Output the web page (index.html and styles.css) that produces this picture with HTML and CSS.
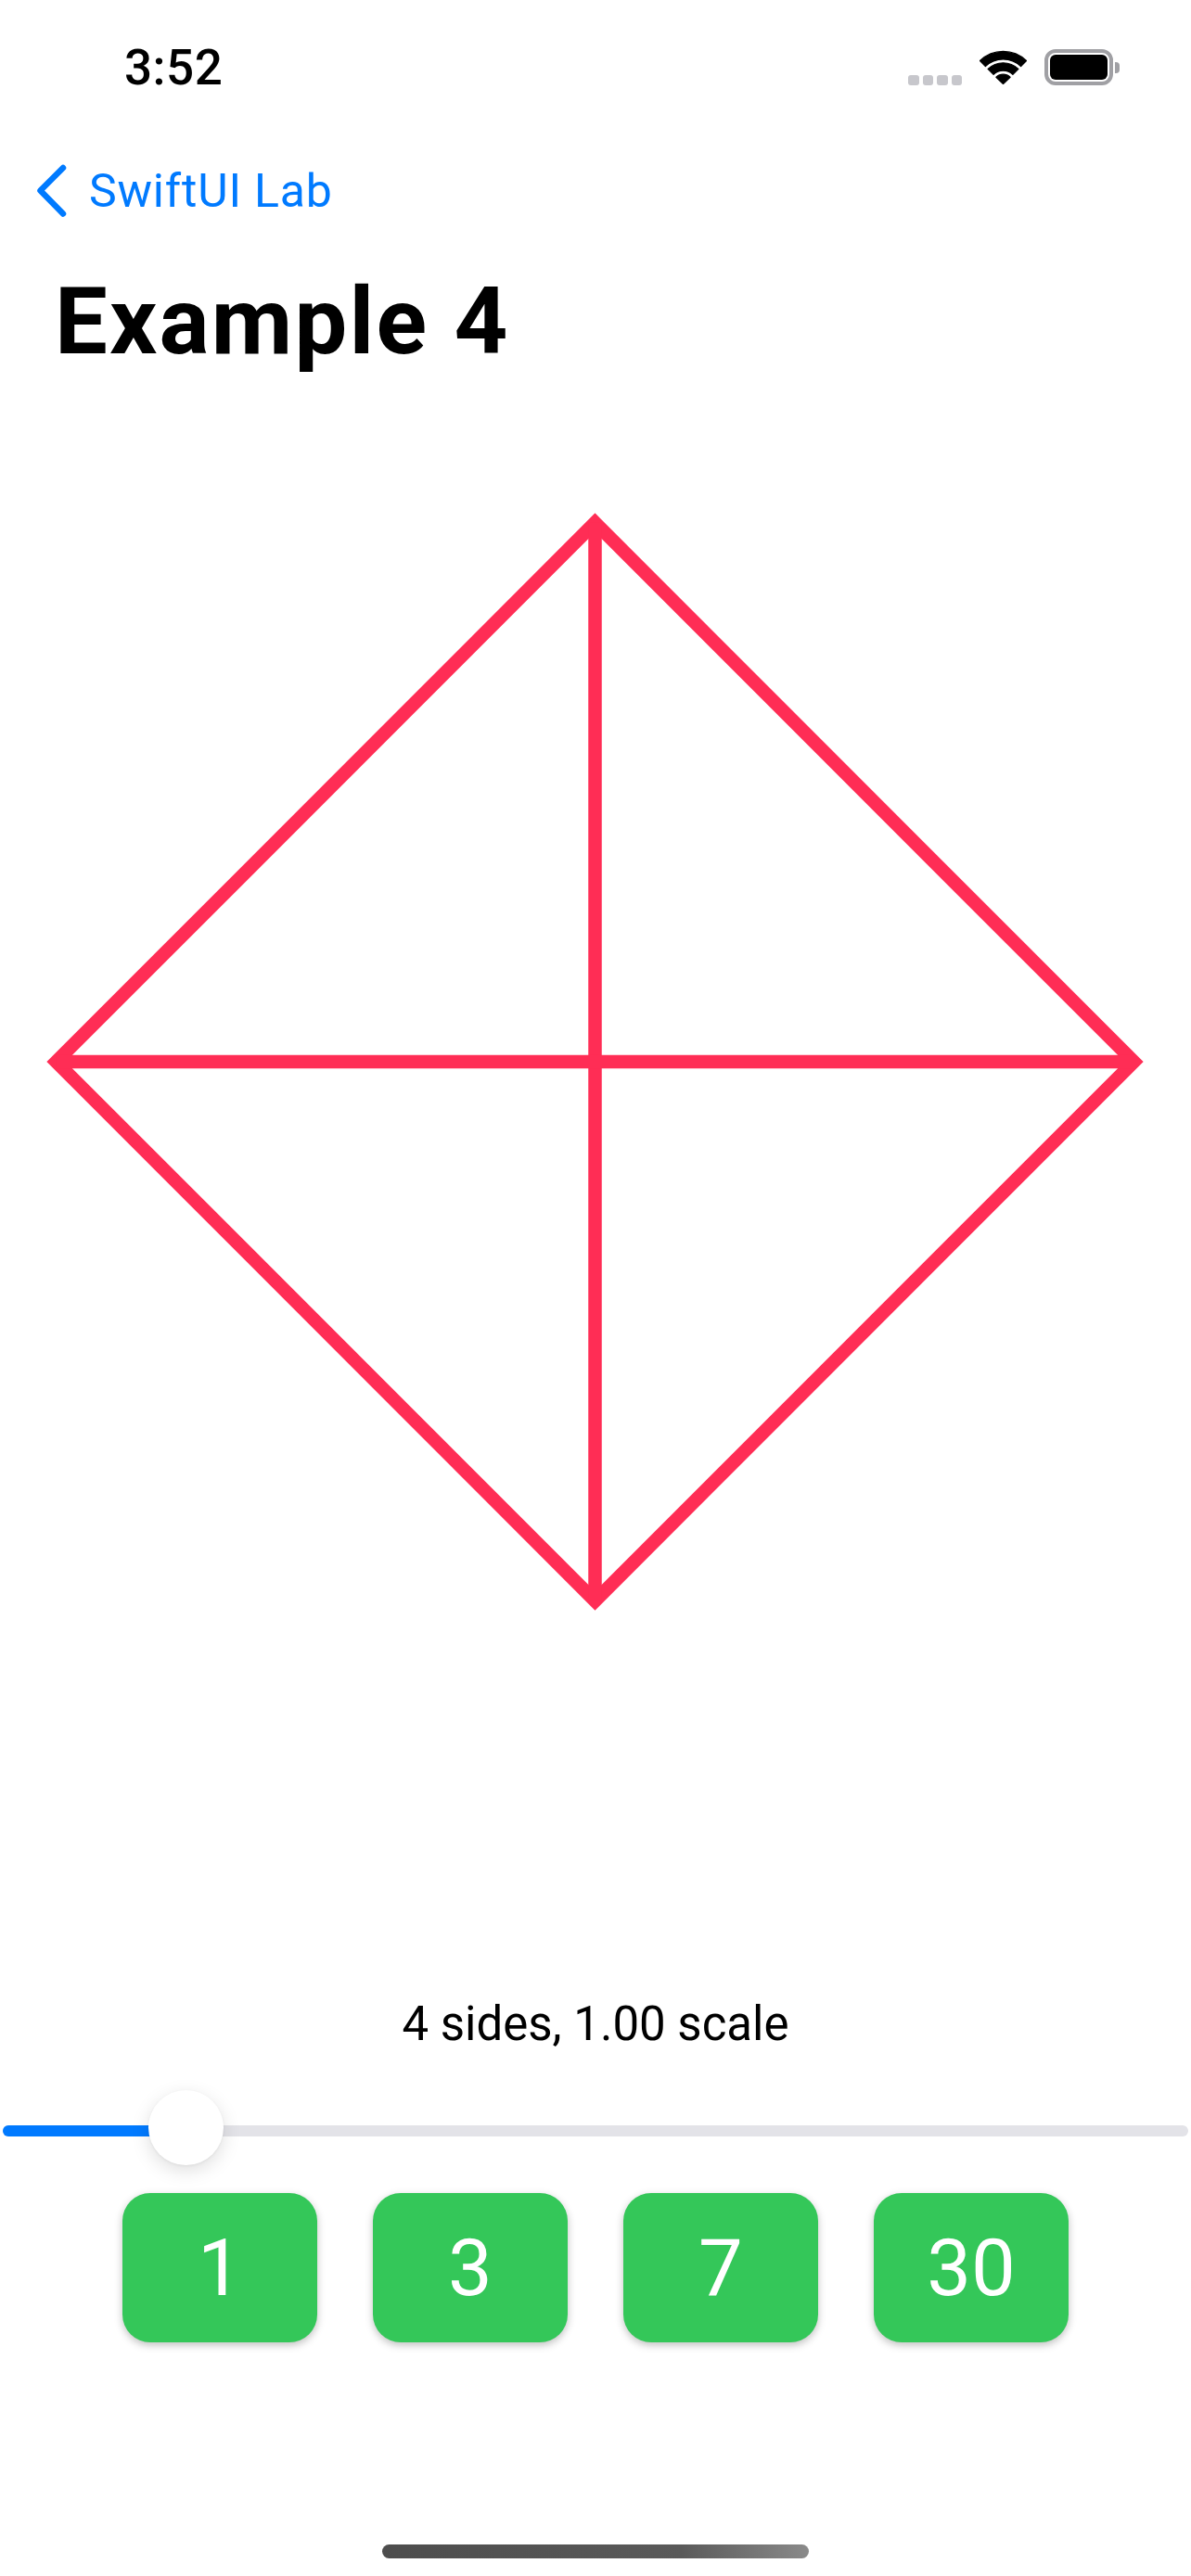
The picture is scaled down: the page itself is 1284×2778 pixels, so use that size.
FILE: index.html
```html
<!DOCTYPE html>
<html lang="en">
<head>
<meta charset="utf-8">
<title>Example 4</title>
<link rel="stylesheet" href="styles.css">
</head>
<body>
<div class="screen">
  <div class="status">
    <div class="time">3:52</div>
    <div class="status-icons">
      <div class="signal"><span></span><span></span><span></span><span></span></div>
      <svg class="wifi" width="51" height="37" viewBox="0 0 51 37">
        <path d="M0.5,11.5 A36 36 0 0 1 50.5,11.5 L44.6,17.6 A27.5 27.5 0 0 0 6.4,17.6 Z M9.1,20.4 A23.5 23.5 0 0 1 41.9,20.4 L35.9,26.4 A15 15 0 0 0 15.1,26.4 Z M17.9,29.2 A11 11 0 0 1 33.1,29.2 L25.5,36.5 Z" fill="#000" stroke="#000" stroke-width="1.2" stroke-linejoin="round"/>
      </svg>
      <div class="battery"><div class="battery-fill"></div><div class="battery-cap"></div></div>
    </div>
  </div>

  <div class="nav">
    <svg class="chevron" width="40" height="60" viewBox="0 0 40 60">
      <path d="M32,5 L7.5,29.5 L32,54.5" fill="none" stroke="#007AFF" stroke-width="6.5" stroke-linecap="round" stroke-linejoin="round"/>
    </svg>
    <span class="back-label">SwiftUI Lab</span>
  </div>

  <h1 class="title">Example 4</h1>

  <svg class="canvas" width="1284" height="1210" viewBox="0 0 1284 1210">
    <g fill="none" stroke="#FF2D55" stroke-width="14.5" stroke-linejoin="miter" stroke-miterlimit="10">
      <polygon points="641.5,23.6 1222.4,605 641.5,1186.4 60.6,605"/>
      <line x1="641.5" y1="23.6" x2="641.5" y2="1186.4"/>
      <line x1="60.6" y1="605" x2="1222.4" y2="605"/>
    </g>
  </svg>

  <div class="label">4 sides, 1.00 scale</div>

  <div class="slider">
    <div class="track">
      <div class="track-fill"></div>
      <div class="thumb"></div>
    </div>
  </div>

  <div class="buttons">
    <div class="btn">1</div>
    <div class="btn">3</div>
    <div class="btn">7</div>
    <div class="btn">30</div>
  </div>

  <div class="home-indicator"></div>
</div>
</body>
</html>
```

FILE: styles.css
```css
html, body {
  margin: 0;
  padding: 0;
  background: #fff;
}

body {
  font-family: Roboto, "Noto Sans", "Liberation Sans", sans-serif;
  color: #000;
}

.screen {
  width: 1284px;
  height: 2778px;
  overflow: hidden;
  display: flex;
  flex-direction: column;
}

/* status bar */
.status {
  height: 141px;
  display: flex;
  justify-content: space-between;
  align-items: flex-start;
  box-sizing: border-box;
  padding: 0 78px 0 134px;
}

.time {
  margin-top: 47px;
  font-size: 53px;
  line-height: 53px;
  font-weight: 500;
  letter-spacing: 0.5px;
}

.status-icons {
  margin-top: 53px;
  height: 39px;
  display: flex;
  align-items: flex-end;
  gap: 19px;
}

.signal {
  display: flex;
  gap: 4px;
  height: 11px;
}

.signal span {
  width: 11.5px;
  height: 11px;
  border-radius: 3px;
  background: #c7c7cc;
}

.wifi {
  display: block;
  margin-bottom: 1px;
}

.battery {
  position: relative;
  width: 74px;
  height: 39px;
  box-sizing: border-box;
  border: 4px solid #a0a0a4;
  border-radius: 12px;
  margin-right: 6px;
}

.battery-fill {
  position: absolute;
  left: 2px;
  top: 2px;
  right: 2px;
  bottom: 2px;
  background: #000;
  border-radius: 6px;
}

.battery-cap {
  position: absolute;
  right: -11px;
  top: 10px;
  width: 5px;
  height: 12px;
  background: #a0a0a4;
  border-radius: 0 4px 4px 0;
}

/* nav */
.nav {
  margin-top: 40px;
  height: 50px;
  display: flex;
  align-items: center;
  gap: 20px;
  padding-left: 36px;
}

.chevron {
  display: block;
  flex: none;
}

.back-label {
  font-size: 50px;
  line-height: 50px;
  color: #007AFF;
  letter-spacing: 0.8px;
}

.title {
  margin: 65px 0 0 0;
  padding-left: 59px;
  font-size: 101px;
  line-height: 101px;
  font-weight: 700;
  letter-spacing: 2.2px;
}

.canvas {
  display: block;
  margin-top: 143px;
  flex: none;
}

.label {
  margin-top: 407px;
  text-align: center;
  font-size: 51px;
  line-height: 51px;
}

/* slider */
.slider {
  margin-top: 83.5px;
  padding: 0 3px;
}

.track {
  position: relative;
  height: 12px;
  border-radius: 6px;
  background: #e3e3e8;
}

.track-fill {
  width: 185px;
  height: 12px;
  border-radius: 6px 0 0 6px;
  background: #007AFF;
}

.thumb {
  position: absolute;
  left: 156.5px;
  top: -37.5px;
  width: 81px;
  height: 81px;
  border-radius: 50%;
  background: #fff;
  box-shadow: 0 6px 20px rgba(0, 0, 0, 0.13), 0 1px 3px rgba(0, 0, 0, 0.06);
}

/* buttons */
.buttons {
  margin-top: 61.5px;
  display: flex;
  justify-content: center;
  gap: 60px;
}

.btn {
  width: 210px;
  height: 161px;
  border-radius: 30px;
  background: #34C759;
  color: #fff;
  display: flex;
  align-items: center;
  justify-content: center;
  font-size: 85px;
  line-height: 84px;
  font-weight: 400;
  box-shadow: 0 3px 9px rgba(0, 0, 0, 0.25);
}

.home-indicator {
  margin: 218px auto 0;
  width: 460px;
  height: 15px;
  border-radius: 8px;
  background: linear-gradient(90deg, #4d4d4d 0%, #5a5a5a 70%, #8a8a8a 100%);
}
```
